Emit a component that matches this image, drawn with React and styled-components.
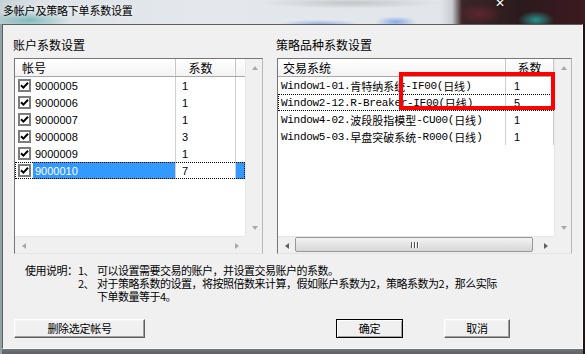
import React from 'react';
import styled, { createGlobalStyle } from 'styled-components';

const CJK = '"Noto Sans CJK SC", "Noto Sans", sans-serif';

const GlobalStyle = createGlobalStyle`
  html, body { margin: 0; padding: 0; background: #2a2a2a; }
  body { font-family: ${CJK}; color: #000; }
  * { box-sizing: border-box; }
`;

const Frame = styled.div`
  width: 585px;
  height: 354px;
  display: flex;
  flex-direction: column;
  overflow: hidden;
  background:
    linear-gradient(90deg, #8fa3a7 0, #8fa3a7 2px, transparent 2px, transparent 583px, #1e1415 583px),
    linear-gradient(180deg, #7c8286 0, #9a9fa3 340px, #5d6166 354px);
`;

const TitleBar = styled.div`
  position: relative;
  height: 24px;
  flex: none;
  padding: 3px 0 0 3px;
  font-size: 11px;
  line-height: 15px;
  letter-spacing: -0.2px;
  text-shadow: 0 0 6px rgba(255, 255, 255, 0.9);
  background:
    radial-gradient(60px 14px at 30px 20px, rgba(40, 150, 150, 0.5), rgba(40, 150, 150, 0) 70%),
    radial-gradient(60px 6px at 320px 24px, rgba(70, 130, 230, 0.5), rgba(70, 130, 230, 0) 70%),
    radial-gradient(30px 8px at 396px 22px, rgba(70, 130, 230, 0.6), rgba(70, 130, 230, 0) 70%),
    radial-gradient(130px 8px at 350px 3px, rgba(50, 50, 50, 0.18), rgba(50, 50, 50, 0) 70%),
    radial-gradient(24px 12px at 536px 20px, rgba(40, 170, 160, 0.85), rgba(40, 170, 160, 0) 75%),
    radial-gradient(30px 14px at 480px 14px, rgba(120, 40, 50, 0.6), rgba(120, 40, 50, 0) 75%),
    linear-gradient(90deg, #c5d1d5 0, #dde3e7 40px, #e4e8ec 200px, #e2e6ea 440px, #c9cdd1 452px, #3a2527 462px, #2b1a1c 520px, #3c1a20 585px);
`;

const CloseGlyph = styled.span`
  position: absolute;
  left: 495px;
  top: -4px;
  color: #fff;
  font-family: "DejaVu Sans", sans-serif;
  font-size: 12px;
  font-weight: bold;
  text-shadow: 0 0 3px rgba(0, 0, 0, 0.8);
`;

const Client = styled.div`
  flex: 1;
  margin: 0 2px 5px 2px;
  background: #f0f0f0;
  border: 1px solid;
  border-color: #5e5e5e #fafafa #fafafa #5e5e5e;
  padding: 12px 0 0 11px;
  display: flex;
  flex-direction: column;
`;

const Panels = styled.div`
  display: grid;
  grid-template-columns: 249px 295px;
  column-gap: 14px;
`;

const Group = styled.section`
  display: flex;
  flex-direction: column;
`;

const GroupLabel = styled.div`
  font-size: 12px;
  line-height: 16px;
  margin: 0 0 5px -1px;
`;

const ListBox = styled.div`
  position: relative;
  height: 196px;
  border: 1px solid;
  border-color: #767676 #b8b8b8 #e4e4e4 #767676;
  background: #fff;
  display: grid;
  grid-template-columns: 1fr 17px;
  grid-template-rows: 1fr 17px;
`;

const Content = styled.div`
  overflow: hidden;
`;

const Header = styled.div`
  display: flex;
  height: 18px;
  background: linear-gradient(#ffffff, #f3f3f3);
  border-bottom: 1px solid #a8a8a8;
  font-size: 12px;
  line-height: 17px;
`;

const HeadCell = styled.div`
  width: ${p => (p.$w ? `${p.$w}px` : 'auto')};
  flex: ${p => (p.$w ? 'none' : '1')};
  padding-left: ${p => p.$pad || 0}px;
  text-align: ${p => p.$align || 'left'};
  border-right: ${p => (p.$w ? '1px solid #c6c6c6' : 'none')};
  box-shadow: ${p => (p.$w ? 'inset -1px 0 0 #fff' : 'none')};
  white-space: nowrap;
`;

const Row = styled.div`
  display: flex;
  height: 17px;
  align-items: stretch;
  outline: ${p => (p.$focus ? '1px dotted #000' : 'none')};
  outline-offset: -1px;
`;

const CheckCell = styled.div`
  width: 18px;
  flex: none;
  padding-left: 3px;
  display: flex;
  align-items: center;
`;

const Box = styled.span`
  width: 13px;
  height: 13px;
  border: 2px solid #7c7c7c;
  background: #fff;
  display: flex;
  align-items: center;
  justify-content: center;
`;

const Cell = styled.div`
  width: ${p => (p.$w ? `${p.$w}px` : 'auto')};
  flex: ${p => (p.$w ? 'none' : '1')};
  padding-left: ${p => p.$pad || 0}px;
  border-right: ${p => (p.$line ? '1px solid #cfcfcf' : 'none')};
  background: ${p => (p.$sel ? '#3399ff' : 'transparent')};
  color: ${p => (p.$sel ? '#fff' : '#000')};
  display: flex;
  align-items: center;
  white-space: nowrap;
  font-family: ${p => (p.$num ? '"Liberation Sans", sans-serif' : CJK)};
  font-size: ${p => (p.$num ? '11px' : '11px')};
`;

const Latin = styled.span`
  font-family: "Liberation Mono", monospace;
  font-size: 11px;
  letter-spacing: -0.3px;
`;

const VScroll = styled.div`
  background: #f0f0f0;
  border-left: 1px solid #e6e6e6;
  display: flex;
  flex-direction: column;
  justify-content: space-between;
`;

const HScroll = styled.div`
  position: relative;
  background: #f0f0f0;
  border-top: 1px solid #e6e6e6;
  display: flex;
  justify-content: space-between;
`;

const Corner = styled.div`
  background: #f0f0f0;
`;

const ArrowBtn = styled.div`
  width: 17px;
  height: 17px;
  flex: none;
  display: flex;
  align-items: center;
  justify-content: center;
`;

const Arrow = styled.span`
  width: 0;
  height: 0;
  border-style: solid;
  border-color: transparent;
  ${p => {
    const c = p.$on ? '#606060' : '#a9a9a9';
    if (p.$dir === 'up') return `border-width: 0 3.5px 4px 3.5px; border-bottom-color: ${c};`;
    if (p.$dir === 'down') return `border-width: 4px 3.5px 0 3.5px; border-top-color: ${c};`;
    if (p.$dir === 'left') return `border-width: 3.5px 4px 3.5px 0; border-right-color: ${c};`;
    return `border-width: 3.5px 0 3.5px 4px; border-left-color: ${c};`;
  }}
`;

const Thumb = styled.div`
  position: absolute;
  top: 0;
  left: 17px;
  width: 238px;
  height: 15px;
  border: 1px solid #979797;
  border-radius: 2px;
  background: linear-gradient(#f4f4f4, #e4e4e4 50%, #d6d6d6);
  display: flex;
  align-items: center;
  justify-content: center;
  gap: 2px;
`;

const Grip = styled.span`
  width: 1px;
  height: 6px;
  background: #555;
  box-shadow: 1px 0 0 #fff;
`;

const Mark = styled.div`
  position: absolute;
  left: 121px;
  top: 13px;
  width: 156px;
  height: 38px;
  border: 4px solid #ff0000;
  pointer-events: none;
`;

const Notes = styled.div`
  margin-top: 10px;
  padding-left: 11px;
  display: grid;
  grid-template-columns: 53px auto;
  font-size: 11px;
  line-height: 13px;
  letter-spacing: -0.5px;
  white-space: nowrap;
`;

const NoteItem = styled.div`
  display: grid;
  grid-template-columns: 19px auto;
`;

const ButtonRow = styled.div`
  margin-top: 16px;
  margin-right: 72px;
  display: flex;
  align-items: center;
`;

const Button = styled.button`
  width: ${p => p.$w}px;
  height: 19px;
  margin-left: ${p => p.$ml || '0'};
  padding: 0;
  font-family: ${CJK};
  font-size: 11px;
  line-height: 15px;
  letter-spacing: -0.3px;
  color: #000;
  background: #f0f0f0;
  border: 1px solid;
  border-color: ${p => (p.$default ? '#000' : '#fff #5f5f5f #5f5f5f #fff')};
  box-shadow: ${p => (p.$default
    ? 'inset 1px 1px 0 #fff, inset -1px -1px 0 #a0a0a0'
    : 'inset -1px -1px 0 #a0a0a0, inset 1px 1px 0 #f6f6f6')};
`;

const accounts = [
  { id: '9000005', k: 1 },
  { id: '9000006', k: 1 },
  { id: '9000007', k: 1 },
  { id: '9000008', k: 3 },
  { id: '9000009', k: 1 },
  { id: '9000010', k: 7, sel: true },
];

const strategies = [
  { name: 'Window1-01.肯特纳系统-IF00(日线)', k: 1 },
  { name: 'Window2-12.R-Breaker-IF00(日线)', k: 5, focus: true },
  { name: 'Window4-02.波段股指模型-CU00(日线)', k: 1 },
  { name: 'Window5-03.早盘突破系统-R000(日线)', k: 1 },
];

function Mixed({ text }) {
  return text
    .split(/([\x00-\x7f]+)/)
    .filter(Boolean)
    .map((p, i) => (/^[\x00-\x7f]+$/.test(p) ? <Latin key={i}>{p}</Latin> : <span key={i}>{p}</span>));
}

function Check() {
  return (
    <Box>
      <svg width="9" height="9" viewBox="0 0 9 9">
        <path d="M1 4.2 L3.4 6.6 L8 1.8" fill="none" stroke="#000" strokeWidth="2" />
      </svg>
    </Box>
  );
}

function Scrollbars({ hEnabled }) {
  return (
    <>
      <VScroll>
        <ArrowBtn><Arrow $dir="up" /></ArrowBtn>
        <ArrowBtn><Arrow $dir="down" /></ArrowBtn>
      </VScroll>
      <HScroll>
        <ArrowBtn><Arrow $dir="left" $on={hEnabled} /></ArrowBtn>
        {hEnabled && (
          <Thumb>
            <Grip /><Grip /><Grip />
          </Thumb>
        )}
        <ArrowBtn><Arrow $dir="right" $on={hEnabled} /></ArrowBtn>
      </HScroll>
      <Corner />
    </>
  );
}

export default function App() {
  return (
    <Frame>
      <GlobalStyle />
      <TitleBar>
        多帐户及策略下单系数设置
        <CloseGlyph>✕</CloseGlyph>
      </TitleBar>
      <Client>
        <Panels>
          <Group>
            <GroupLabel>账户系数设置</GroupLabel>
            <ListBox>
              <Content>
                <Header>
                  <HeadCell $w={161} $pad={7}>帐号</HeadCell>
                  <HeadCell $w={60} $align="center" style={{ paddingRight: 10 }}>系数</HeadCell>
                  <HeadCell />
                </Header>
                {accounts.map(a => (
                  <Row key={a.id} $focus={a.sel}>
                    <CheckCell><Check /></CheckCell>
                    <Cell $w={143} $pad={2} $line $num $sel={a.sel}>{a.id}</Cell>
                    <Cell $w={60} $pad={6} $line $num>{a.k}</Cell>
                    <Cell $sel={a.sel} />
                  </Row>
                ))}
              </Content>
              <Scrollbars />
            </ListBox>
          </Group>
          <Group>
            <GroupLabel>策略品种系数设置</GroupLabel>
            <ListBox>
              <Content>
                <Header>
                  <HeadCell $w={228} $pad={5}>交易系统</HeadCell>
                  <HeadCell $w={48} $align="center">系数</HeadCell>
                </Header>
                {strategies.map(s => (
                  <Row key={s.name} $focus={s.focus}>
                    <Cell $w={228} $pad={3} $line><Mixed text={s.name} /></Cell>
                    <Cell $w={48} $pad={8} $line $num>{s.k}</Cell>
                  </Row>
                ))}
              </Content>
              <Scrollbars hEnabled />
              <Mark />
            </ListBox>
          </Group>
        </Panels>
        <Notes>
          <span>使用说明：</span>
          <div>
            <NoteItem>
              <span>1、</span>
              <span>可以设置需要交易的账户，并设置交易账户的系数。</span>
            </NoteItem>
            <NoteItem>
              <span>2、</span>
              <span>
                对于策略系数的设置，将按照倍数来计算，假如账户系数为2，策略系数为2，那么实际
                <br />
                下单数量等于4。
              </span>
            </NoteItem>
          </div>
        </Notes>
        <ButtonRow>
          <Button $w={131}>删除选定帐号</Button>
          <Button $w={67} $ml="auto" $default>确定</Button>
          <Button $w={66} $ml="41px">取消</Button>
        </ButtonRow>
      </Client>
    </Frame>
  );
}
